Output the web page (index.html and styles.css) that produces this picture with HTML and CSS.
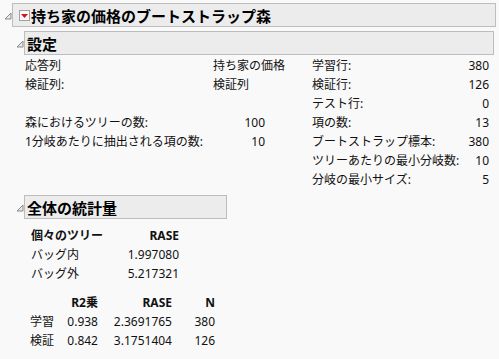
FILE: index.html
```html
<!DOCTYPE html>
<html lang="ja">
<head>
    <meta charset="UTF-8">
    <title>持ち家の価格のブートストラップ森</title>
    <link rel="stylesheet" href="styles.css">
</head>
<body>

    <!-- Top level report -->
    <div class="outline top">
        <div class="head">
            <svg class="tri" width="8" height="8" viewBox="0 0 8 8"><polygon points="7,1 7,7 1,7" fill="#e8e8e8" stroke="#8a8a8a" stroke-width="1"/></svg>
            <div class="box">
                <span class="menu-btn">
                    <svg width="9" height="9" viewBox="0 0 9 9"><polygon points="1,3 8,3 4.5,7" fill="#d4141c"/></svg>
                </span>
                <span class="title main-title">持ち家の価格のブートストラップ森</span>
            </div>
        </div>

        <div class="body">
            <!-- Settings -->
            <div class="outline">
                <div class="head">
                    <svg class="tri" width="8" height="8" viewBox="0 0 8 8"><polygon points="7,1 7,7 1,7" fill="#e8e8e8" stroke="#8a8a8a" stroke-width="1"/></svg>
                    <div class="box">
                        <span class="title">設定</span>
                    </div>
                </div>
                <div class="content settings">
                    <div class="set-left">
                        <div class="row"><span class="lbl">応答列</span><span class="val txt">持ち家の価格</span></div>
                        <div class="row"><span class="lbl">検証列:</span><span class="val txt">検証列</span></div>
                        <div class="row"></div>
                        <div class="row"><span class="lbl">森におけるツリーの数:</span><span class="val">100</span></div>
                        <div class="row"><span class="lbl">1分岐あたりに抽出される項の数:</span><span class="val">10</span></div>
                    </div>
                    <div class="set-right">
                        <div class="row"><span>学習行:</span><span>380</span></div>
                        <div class="row"><span>検証行:</span><span>126</span></div>
                        <div class="row"><span>テスト行:</span><span>0</span></div>
                        <div class="row"><span>項の数:</span><span>13</span></div>
                        <div class="row"><span>ブートストラップ標本:</span><span>380</span></div>
                        <div class="row"><span>ツリーあたりの最小分岐数:</span><span>10</span></div>
                        <div class="row"><span>分岐の最小サイズ:</span><span>5</span></div>
                    </div>
                </div>
            </div>

            <!-- Overall statistics -->
            <div class="outline stats">
                <div class="head">
                    <svg class="tri" width="8" height="8" viewBox="0 0 8 8"><polygon points="7,1 7,7 1,7" fill="#e8e8e8" stroke="#8a8a8a" stroke-width="1"/></svg>
                    <div class="box short">
                        <span class="title">全体の統計量</span>
                    </div>
                </div>
                <div class="content">
                    <div class="table t1">
                        <span class="th left">個々のツリー</span><span class="th">RASE</span>
                        <span class="left">バッグ内</span><span>1.997080</span>
                        <span class="left">バッグ外</span><span>5.217321</span>
                    </div>
                    <div class="table t2">
                        <span></span><span class="th">R2乗</span><span class="th">RASE</span><span class="th">N</span>
                        <span class="left">学習</span><span>0.938</span><span>2.3691765</span><span>380</span>
                        <span class="left">検証</span><span>0.842</span><span>3.1751404</span><span>126</span>
                    </div>
                </div>
            </div>
        </div>
    </div>

</body>
</html>
```

FILE: styles.css
```css
body {
    margin: 0;
    padding: 0;
    background-color: #f9f9f9;
    color: #111;
    font-family: "Noto Sans", "Noto Sans CJK JP", sans-serif;
    font-size: 12px;
    line-height: 19px;
}

.outline.top {
    margin: 3px 3px 0 4px;
}

.head {
    display: flex;
    align-items: center;
}

.tri {
    width: 8px;
    flex: none;
    margin-top: 1px;
}

.box {
    flex: 1;
    height: 22px;
    background-color: #ececec;
    border: 1px solid #bdbdbd;
    display: flex;
    align-items: center;
    padding-left: 2px;
}

.box.short {
    flex: none;
    width: 199px;
}

.title {
    font-family: "Noto Sans CJK JP", sans-serif;
    font-weight: bold;
    font-size: 15px;
    color: #000;
}

.menu-btn {
    width: 9px;
    height: 9px;
    border: 1px solid #a0a0a0;
    background-color: #fafafa;
    display: flex;
    align-items: center;
    justify-content: center;
    margin: 0 1px 0 4px;
}

.top > .body {
    padding: 4px 2px 0 12px;
}

.content {
    padding-left: 9px;
}

.settings {
    display: flex;
    padding-top: 1px;
}

.set-left {
    width: 287px;
}

.row {
    display: flex;
    height: 19px;
    white-space: nowrap;
}

.lbl {
    width: 188px;
}

.val {
    width: 52px;
    text-align: right;
}

.val.txt {
    text-align: left;
}

.set-right {
    width: 177px;
}

.set-right .row {
    justify-content: space-between;
}

.stats {
    margin-top: 6px;
}

.table {
    display: grid;
    white-space: nowrap;
}

.table span {
    text-align: right;
    height: 19px;
}

.table .left {
    text-align: left;
}

.th {
    font-weight: bold;
}

.t1 {
    grid-template-columns: 90px 58px;
    padding: 7px 0 0 6px;
}

.t2 {
    grid-template-columns: 30px 38px 74px 43px;
    padding: 10px 0 0 5px;
}
```
